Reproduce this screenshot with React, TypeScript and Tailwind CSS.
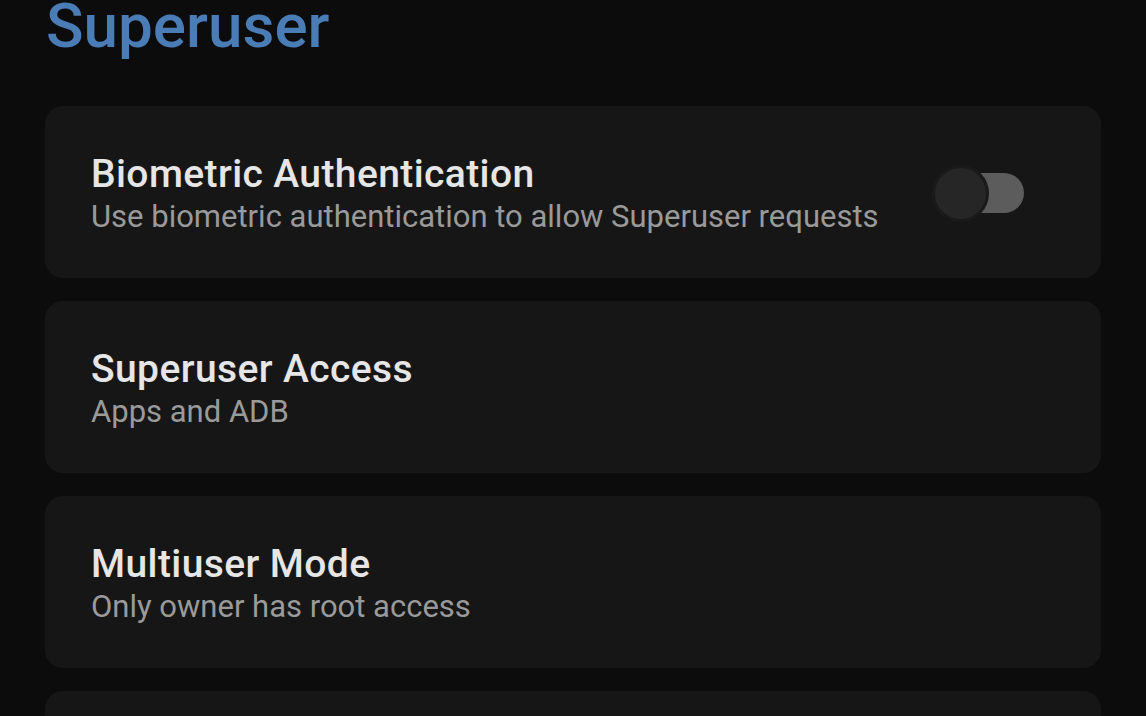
type Item = { title?: string; subtitle?: string; toggle?: boolean };

export default function App() {
  const items: Item[] = [
    {
      title: "Biometric Authentication",
      subtitle: "Use biometric authentication to allow Superuser requests",
      toggle: true,
    },
    { title: "Superuser Access", subtitle: "Apps and ADB" },
    { title: "Multiuser Mode", subtitle: "Only owner has root access" },
    // next card only peeks in at the bottom edge
    {},
  ];

  return (
    <div
      className="h-[716px] w-full overflow-hidden bg-[#0c0c0c] px-[45px] pt-[1px]"
      style={{ fontFamily: "Roboto, 'Noto Sans', sans-serif" }}
    >
      <h1 className="pl-[1px] text-[62px] leading-[50px] font-medium text-[#4a7cb5]">Superuser</h1>

      <div className="mt-[55px] flex flex-col gap-[23px]">
        {items.map((item, i) => (
          <div
            key={i}
            className="flex h-[172px] shrink-0 items-start justify-between rounded-[18px] bg-[#161616] pr-[77px] pl-[46px] pt-[45px]"
          >
            {item.title && (
              <div>
                <p className="text-[39px] leading-[46px] font-medium tracking-[0.4px] text-[#e6e6e6]">
                  {item.title}
                </p>
                <p className="text-[31px] leading-[40px] text-[#9a9a9a]">{item.subtitle}</p>
              </div>
            )}
            {item.toggle && (
              <div className="relative mt-[13px] h-[59px] w-[92px] shrink-0">
                <div className="absolute top-[9px] right-0 h-[40px] w-[76px] rounded-full bg-[#5c5c5c]" />
                <div className="absolute top-[1px] left-0 h-[57px] w-[57px] rounded-full border-[3px] border-[#1a1a1a] bg-[#262626]" />
              </div>
            )}
          </div>
        ))}
      </div>
    </div>
  );
}
